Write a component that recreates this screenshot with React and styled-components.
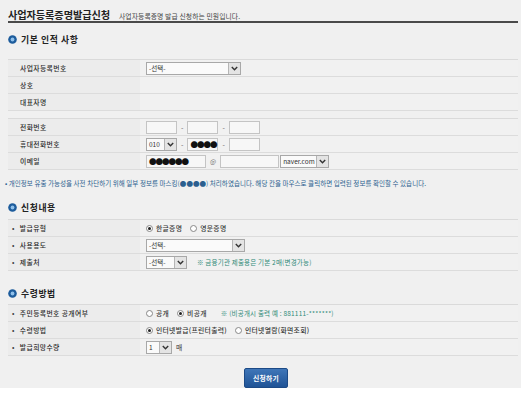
import React from 'react';
import styled, { createGlobalStyle } from 'styled-components';

const GlobalStyle = createGlobalStyle`
  html, body {
    margin: 0;
    padding: 0;
    background: #ffffff;
  }
  body {
    font-family: "Noto Sans CJK KR", "Noto Sans", sans-serif;
    color: #333;
  }
`;

const Page = styled.div`
  width: 521px;
  height: 388px;
  box-sizing: border-box;
  background: #f0f0f0;
  padding: 0 3px 0 8px;
  display: flex;
  flex-direction: column;
`;

const Header = styled.div`
  display: flex;
  align-items: baseline;
  height: 23px;
  box-sizing: border-box;
  padding-top: 7px;
  border-bottom: 2px solid #4a4a4a;
`;

const Title = styled.h1`
  margin: 0;
  font-size: 10.2px;
  font-weight: 700;
  color: #222;
  letter-spacing: -0.1px;
`;

const SubTitle = styled.span`
  margin-left: 9px;
  font-size: 6.8px;
  color: #444;
  letter-spacing: 0.1px;
`;

const SectionTitle = styled.h2`
  display: flex;
  align-items: center;
  gap: 4px;
  margin: ${p => p.$top}px 0 0;
  height: 12px;
  font-size: 8.8px;
  font-weight: 700;
  color: #222;
  letter-spacing: 0.6px;
`;

const Table = styled.div`
  margin-top: ${p => p.$top}px;
  border-top: 1px solid #dadada;
`;

const Row = styled.div`
  display: grid;
  grid-template-columns: 132px 1fr;
  height: 17px;
  border-bottom: 1px solid #dcdcdc;
  box-sizing: border-box;
`;

const Label = styled.div`
  display: flex;
  align-items: center;
  padding-left: ${p => (p.$bullet ? 4 : 12)}px;
  background: #ececec;
  font-size: 6.8px;
  font-weight: 500;
  color: #2a2a2a;
  letter-spacing: 0.4px;
  &::before {
    content: ${p => (p.$bullet ? '"•"' : 'none')};
    margin-right: 5px;
    color: #444;
  }
`;

const Value = styled.div`
  display: flex;
  align-items: center;
  gap: 4px;
  padding-left: 6px;
  background: #f1f1f1;
  font-size: 6.8px;
  color: #333;
`;

const Joined = styled.div`
  display: flex;
  align-items: center;
  gap: 1px;
`;

const Field = styled.div`
  width: ${p => p.$w}px;
  height: 13px;
  box-sizing: border-box;
  border: 1px solid #c4c4c4;
  background: #f7f7f7;
  display: flex;
  align-items: center;
  padding-left: 2px;
  font-size: 7.5px;
  color: #111;
  letter-spacing: -1px;
`;

const SelectBox = styled.div`
  width: ${p => p.$w}px;
  height: 13px;
  box-sizing: border-box;
  border: 1px solid #a8a8a8;
  background: #fafafa;
  display: flex;
  align-items: stretch;
  font-size: 6.5px;
  color: #333;
`;

const SelectText = styled.span`
  flex: 1;
  display: flex;
  align-items: center;
  padding-left: 2px;
`;

const Arrow = styled.span`
  width: 11px;
  border-left: 1px solid #b5b5b5;
  background: #e4e4e4;
  display: flex;
  align-items: center;
  justify-content: center;
`;

const Dash = styled.span`
  font-size: 7px;
  color: #666;
`;

const At = styled.span`
  font-size: 6.5px;
  color: #777;
`;

const RadioItem = styled.label`
  display: flex;
  align-items: center;
  gap: 3px;
  margin-right: 4px;
  font-size: 6.8px;
  font-weight: 500;
  color: #333;
  letter-spacing: 0.3px;
`;

const RadioDot = styled.span`
  width: 7px;
  height: 7px;
  box-sizing: border-box;
  border-radius: 50%;
  border: 1px solid #888;
  background: #fff;
  display: flex;
  align-items: center;
  justify-content: center;
  &::after {
    content: '';
    width: 3px;
    height: 3px;
    border-radius: 50%;
    background: ${p => (p.$on ? '#222' : 'transparent')};
  }
`;

const Hint = styled.span`
  margin-left: ${p => p.$left}px;
  font-size: 6.5px;
  color: #2f8a78;
  letter-spacing: 0.2px;
`;

const Notice = styled.p`
  margin: 8px 0 0 -3px;
  font-size: 6.5px;
  color: #2b5f8f;
  letter-spacing: 0.05px;
  white-space: nowrap;
`;

const ButtonBar = styled.div`
  display: flex;
  justify-content: center;
  margin-top: 12px;
  padding-left: 6px;
`;

const Submit = styled.button`
  width: 44px;
  height: 20px;
  border: 1px solid #1c4a86;
  border-radius: 2px;
  background: linear-gradient(#3f76b8, #1f5396);
  color: #fff;
  font-family: inherit;
  font-size: 6.8px;
  font-weight: 700;
  letter-spacing: 0.3px;
  padding: 0;
`;

const Chevron = () => (
  <svg width="7" height="5" viewBox="0 0 7 5">
    <path d="M0.8 1 L3.5 3.8 L6.2 1" fill="none" stroke="#333" strokeWidth="1.4" />
  </svg>
);

const Bullet = () => (
  <svg width="9" height="9" viewBox="0 0 9 9">
    <circle cx="4.5" cy="4.5" r="4.3" fill="#1d5c9c" />
    <circle cx="4.5" cy="4.5" r="1.9" fill="#8fc0ea" />
  </svg>
);

const Select = ({ w, children }) => (
  <SelectBox $w={w}>
    <SelectText>{children}</SelectText>
    <Arrow>
      <Chevron />
    </Arrow>
  </SelectBox>
);

const Radio = ({ on, children }) => (
  <RadioItem>
    <RadioDot $on={on} />
    {children}
  </RadioItem>
);

const App = () => (
  <>
    <GlobalStyle />
    <Page>
      <Header>
        <Title>사업자등록증명발급신청</Title>
        <SubTitle>사업자등록증명 발급 신청하는 민원입니다.</SubTitle>
      </Header>

      <SectionTitle $top={10}>
        <Bullet />
        기본 인적 사항
      </SectionTitle>

      <Table $top={14}>
        <Row>
          <Label>사업자등록번호</Label>
          <Value>
            <Select w={95}>-선택-</Select>
          </Value>
        </Row>
        <Row>
          <Label>상호</Label>
          <Value />
        </Row>
        <Row>
          <Label>대표자명</Label>
          <Value />
        </Row>
      </Table>

      <Table $top={7}>
        <Row>
          <Label>전화번호</Label>
          <Value>
            <Field $w={31} />
            <Dash>-</Dash>
            <Field $w={31} />
            <Dash>-</Dash>
            <Field $w={31} />
          </Value>
        </Row>
        <Row>
          <Label>휴대전화번호</Label>
          <Value>
            <Select w={31}>010</Select>
            <Dash>-</Dash>
            <Field $w={31}>●●●●</Field>
            <Dash>-</Dash>
            <Field $w={31} />
          </Value>
        </Row>
        <Row>
          <Label>이메일</Label>
          <Value>
            <Field $w={60}>●●●●●●</Field>
            <At>@</At>
            <Joined>
              <Field $w={59} />
              <Select w={49}>naver.com</Select>
            </Joined>
          </Value>
        </Row>
      </Table>

      <Notice>
        • 개인정보 유출 가능성을 사전 차단하기 위해 일부 정보를 마스킹(●●●●) 처리하였습니다. 해당 칸을 마우스로 클릭하면 입력된 정보를 확인할 수 있습니다.
      </Notice>

      <SectionTitle $top={13}>
        <Bullet />
        신청내용
      </SectionTitle>

      <Table $top={6}>
        <Row>
          <Label $bullet>발급유형</Label>
          <Value>
            <Radio on>한글증명</Radio>
            <Radio>영문증명</Radio>
          </Value>
        </Row>
        <Row>
          <Label $bullet>사용용도</Label>
          <Value>
            <Select w={99}>-선택-</Select>
          </Value>
        </Row>
        <Row>
          <Label $bullet>제출처</Label>
          <Value>
            <Select w={41}>-선택-</Select>
            <Hint $left={6}>※ 금융기관 제출용은 기본 2매(변경가능)</Hint>
          </Value>
        </Row>
      </Table>

      <SectionTitle $top={16}>
        <Bullet />
        수령방법
      </SectionTitle>

      <Table $top={5}>
        <Row>
          <Label $bullet>주민등록번호 공개여부</Label>
          <Value>
            <Radio>공개</Radio>
            <Radio on>비공개</Radio>
            <Hint $left={6}>※ (비공개시 출력 예 : 881111-*******)</Hint>
          </Value>
        </Row>
        <Row>
          <Label $bullet>수령방법</Label>
          <Value>
            <Radio on>인터넷발급(프린터출력)</Radio>
            <Radio>인터넷열람(화면조회)</Radio>
          </Value>
        </Row>
        <Row>
          <Label $bullet>발급희망수량</Label>
          <Value>
            <Select w={26}>1</Select>
            <span>매</span>
          </Value>
        </Row>
      </Table>

      <ButtonBar>
        <Submit type="button">신청하기</Submit>
      </ButtonBar>
    </Page>
  </>
);

export default App;
